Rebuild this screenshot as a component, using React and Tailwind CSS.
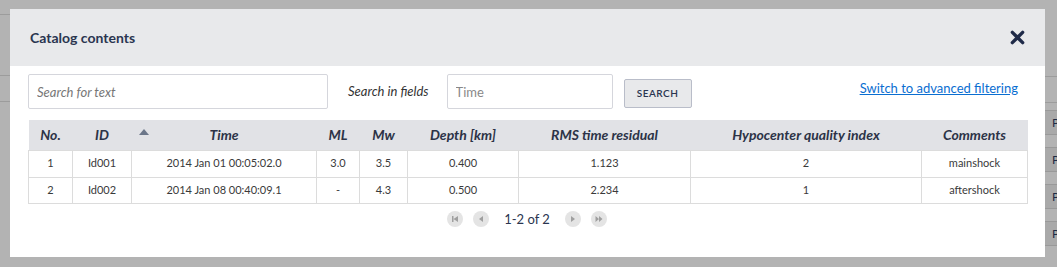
import React from 'react'

const cols = [
  { key: 'no', label: 'No.', w: 'w-[44px]' },
  { key: 'id', label: 'ID', w: 'w-[59px]' },
  { key: 'time', label: 'Time', w: 'w-[185px]', sort: true },
  { key: 'ml', label: 'ML', w: 'w-[43px]' },
  { key: 'mw', label: 'Mw', w: 'w-[48px]' },
  { key: 'depth', label: 'Depth [km]', w: 'w-[111px]' },
  { key: 'rms', label: 'RMS time residual', w: 'w-[172px]' },
  { key: 'hq', label: 'Hypocenter quality index', w: 'w-[231px]' },
  { key: 'comments', label: 'Comments', w: 'w-[106px]' },
]

const rows = [
  { no: '1', id: 'Id001', time: '2014 Jan 01 00:05:02.0', ml: '3.0', mw: '3.5', depth: '0.400', rms: '1.123', hq: '2', comments: 'mainshock' },
  { no: '2', id: 'Id002', time: '2014 Jan 08 00:40:09.1', ml: '-', mw: '4.3', depth: '0.500', rms: '2.234', hq: '1', comments: 'aftershock' },
]

function PageBtn({ children }) {
  return (
    <span className="w-[16px] h-[16px] rounded-full bg-[#e4e4e4] flex items-center justify-center">
      <svg width="10" height="10" viewBox="0 0 10 10" fill="#9f9f9f">{children}</svg>
    </span>
  )
}

export default function App() {
  return (
    <div className="relative w-[1057px] h-[267px] overflow-hidden bg-[#b3b3b3] font-['Lato',sans-serif]">
      {/* dimmed page behind */}
      <div className="absolute left-0 top-[14px] w-[10px] border-t border-[#9c9c9c]" />
      <div className="absolute left-0 top-[75px] w-[10px] border-t border-[#9c9c9c]" />
      <div className="absolute left-0 top-[101px] w-[10px] border-t border-[#9c9c9c]" />
      <div className="absolute left-[1045px] top-[76px] w-[12px] border-t border-[#9c9c9c]" />
      <div className="absolute left-[1045px] top-[102px] w-[12px] border-t border-[#9c9c9c]" />
      <div className="absolute left-[1045px] top-[110px] flex flex-col gap-[12px]">
        {[0, 1, 2, 3].map((i) => (
          <div key={i} className="h-[25px] w-[12px] overflow-hidden bg-[#a9a9a9] border-y border-[#999] pl-[7px] text-[12px] leading-[23px] text-[#1d2a44]">P</div>
        ))}
      </div>

      {/* modal */}
      <div className="absolute left-[10px] top-[9px] w-[1035px] h-[248px] bg-white flex flex-col">
        <div className="h-[57px] bg-[#e8e9eb] flex items-center justify-between pl-[20px] pr-[20px] shrink-0">
          <h2 className="text-[14px] font-bold text-[#2a3550]">Catalog contents</h2>
          <svg width="15" height="15" viewBox="0 0 16 16">
            <path d="M2.5 2.5 L13.5 13.5 M13.5 2.5 L2.5 13.5" stroke="#1f2a48" strokeWidth="3.6" strokeLinecap="round" />
          </svg>
        </div>

        <div className="px-[18px] pt-[8px]">
          <div className="flex items-center h-[35px]">
            <input
              placeholder="Search for text"
              className="w-[300px] h-[35px] border border-[#d5d6dc] rounded-[2px] px-[8px] text-[13px] italic placeholder:text-[#777] outline-none"
            />
            <span className="ml-[20px] text-[13px] italic text-[#333]">Search in fields</span>
            <input
              placeholder="Time"
              className="ml-[18px] w-[166px] h-[35px] border border-[#d5d6dc] rounded-[2px] px-[8px] text-[13px] placeholder:text-[#888] outline-none"
            />
            <button className="ml-[11px] mt-[4px] w-[68px] h-[29px] bg-[#e8e9eb] border border-[#b9bdc9] rounded-[2px] text-[10px] font-semibold tracking-[0.5px] text-[#2a3550]">
              SEARCH
            </button>
            <a href="#" className="ml-auto mr-[9px] -mt-[6px] text-[13px] text-[#0a6ed1] underline">
              Switch to advanced filtering
            </a>
          </div>

          <table className="mt-[11px] w-[999px] border-collapse table-fixed">
            <thead>
              <tr className="h-[30px] bg-[#e1e2e6]">
                {cols.map((c) => (
                  <th key={c.key} className={`${c.w} p-0 text-[14px] font-bold italic text-[#2c3347] text-center`}>
                    {c.sort ? (
                      <span className="relative block">
                        <svg width="10" height="6" viewBox="0 0 10 6" className="absolute left-[7px] top-[5px]">
                          <path d="M5 0 L10 6 L0 6 Z" fill="#6b7689" />
                        </svg>
                        {c.label}
                      </span>
                    ) : (
                      c.label
                    )}
                  </th>
                ))}
              </tr>
            </thead>
            <tbody>
              {rows.map((r, i) => (
                <tr key={r.no} className={i === 0 ? 'h-[27px]' : 'h-[26px]'}>
                  {cols.map((c) => (
                    <td key={c.key} className="p-0 border border-[#dcdcdc] text-[11px] text-[#3a3a3a] text-center">
                      {r[c.key]}
                    </td>
                  ))}
                </tr>
              ))}
            </tbody>
          </table>

          <div className="mt-[6px] flex items-center justify-center gap-[15px] pr-[1px]">
            <div className="flex items-center gap-[10px]">
              <PageBtn><path d="M2 2 H3.5 V8 H2 Z M8 2 V8 L3.5 5 Z" /></PageBtn>
              <PageBtn><path d="M7 2 V8 L3 5 Z" /></PageBtn>
            </div>
            <span className="text-[13px] text-[#2a3550]">1-2 of 2</span>
            <div className="flex items-center gap-[10px]">
              <PageBtn><path d="M3 2 V8 L7 5 Z" /></PageBtn>
              <PageBtn><path d="M1.5 2 V8 L5 5 Z M5 2 V8 L8.5 5 Z" /></PageBtn>
            </div>
          </div>
        </div>
      </div>
    </div>
  )
}
